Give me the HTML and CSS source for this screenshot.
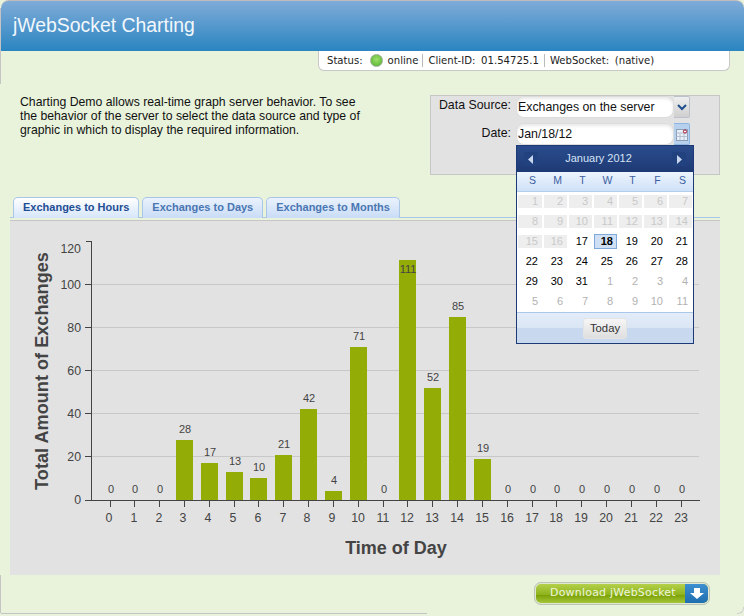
FILE: index.html
```html
<!DOCTYPE html>
<html lang="en">
<head>
<meta charset="utf-8">
<title>jWebSocket Charting</title>
<link rel="stylesheet" href="styles.css">
</head>
<body>
<div class="page">
  <header class="header"><h1 class="title">jWebSocket Charting</h1></header>
  <div class="status-row">
    <div class="status">
      <span class="status-item">Status: <i class="led"></i> online</span>
      <span class="status-item">Client-ID: 01.54725.1</span>
      <span class="status-item">WebSocket: (native)</span>
    </div>
  </div>
  <section class="intro">
    <p class="intro-text">Charting Demo allows real-time graph server behavior. To see the behavior of the server to select the data source and type of graphic in which to display the required information.</p>
    <form class="source-panel">
      <div class="field">
        <span class="field-label">Data Source:</span>
        <div class="field-box">Exchanges on the server</div>
        <div class="field-btn">
          <svg width="10" height="7" viewBox="0 0 10 7"><path d="M1 1l4 4 4-4" fill="none" stroke="#1f4f8f" stroke-width="2"/></svg>
        </div>
      </div>
      <div class="field field-date">
        <span class="field-label">Date:</span>
        <div class="field-box">Jan/18/12</div>
        <div class="field-btn field-btn-active">
          <svg width="12" height="13" viewBox="0 0 12 13"><rect x=".5" y="1.5" width="11" height="11" fill="#e9eff7" stroke="#8b9fb8"/><path d="M.5 5h11M.5 8.500h11M4 5v7M8 5v7" stroke="#b4c1d2" fill="none"/><circle cx="9" cy="3.500" r="1.600" fill="#fff" stroke="#a01030" stroke-width="1"/></svg>
        </div>
      </div>
      <div class="calendar">
        <div class="cal-head">
          <span class="cal-nav"><svg width="6" height="9" viewBox="0 0 6 9"><path d="M5 0v9L0 4.500z" fill="#c9d8ef"/></svg></span>
          <span class="cal-month">January 2012</span>
          <span class="cal-nav"><svg width="6" height="9" viewBox="0 0 6 9"><path d="M1 0v9l5-4.500z" fill="#c9d8ef"/></svg></span>
        </div>
        <div class="cal-week">
          <span>S</span><span>M</span><span>T</span><span>W</span><span>T</span><span>F</span><span>S</span>
        </div>
        <div class="cal-grid">
          <span class="day off">1</span><span class="day off">2</span><span class="day off">3</span><span class="day off">4</span><span class="day off">5</span><span class="day off">6</span><span class="day off">7</span>
          <span class="day off">8</span><span class="day off">9</span><span class="day off">10</span><span class="day off">11</span><span class="day off">12</span><span class="day off">13</span><span class="day off">14</span>
          <span class="day off">15</span><span class="day off">16</span><span class="day">17</span><span class="day today">18</span><span class="day">19</span><span class="day">20</span><span class="day">21</span>
          <span class="day">22</span><span class="day">23</span><span class="day">24</span><span class="day">25</span><span class="day">26</span><span class="day">27</span><span class="day">28</span>
          <span class="day">29</span><span class="day">30</span><span class="day">31</span><span class="day other">1</span><span class="day other">2</span><span class="day other">3</span><span class="day other">4</span>
          <span class="day other">5</span><span class="day other">6</span><span class="day other">7</span><span class="day other">8</span><span class="day other">9</span><span class="day other">10</span><span class="day other">11</span>
        </div>
        <div class="cal-foot"><span class="today-btn">Today</span></div>
      </div>
    </form>
  </section>
  <nav class="tabs">
    <a class="tab tab-active">Exchanges to Hours</a>
    <a class="tab">Exchanges to Days</a>
    <a class="tab">Exchanges to Months</a>
  </nav>
  <section class="chart">
    <svg class="chart-svg" width="710" height="354" viewBox="10 221 710 354">
      <g class="grid">
        <path d="M91 284.500H699M91 327.500H699M91 370.500H699M91 413.500H699M91 456.500H699"/>
      </g>
      <g class="bars">
        <rect x="176" y="440" width="17" height="60"/>
        <rect x="201" y="463" width="17" height="37"/>
        <rect x="226" y="472" width="17" height="28"/>
        <rect x="250" y="478" width="17" height="22"/>
        <rect x="275" y="455" width="17" height="45"/>
        <rect x="300" y="409" width="17" height="91"/>
        <rect x="325" y="491" width="17" height="9"/>
        <rect x="350" y="347" width="17" height="153"/>
        <rect x="399" y="260" width="17" height="240"/>
        <rect x="424" y="388" width="17" height="112"/>
        <rect x="449" y="317" width="17" height="183"/>
        <rect x="474" y="459" width="17" height="41"/>
      </g>
      <g class="axis">
        <path d="M91.500 241V500M86 241.500H91M85 284.500H91M85 327.500H91M85 370.500H91M85 413.500H91M85 456.500H91M85 500.500H700"/>
        <path d="M110.500 500v7M134.500 500v7M159.500 500v7M184.500 500v7M209.500 500v7M234.500 500v7M258.500 500v7M283.500 500v7M308.500 500v7M333.500 500v7M358.500 500v7M383.500 500v7M407.500 500v7M432.500 500v7M457.500 500v7M482.500 500v7M507.500 500v7M532.500 500v7M556.500 500v7M581.500 500v7M606.500 500v7M631.500 500v7M656.500 500v7M681.500 500v7"/>
      </g>
      <g class="y-labels">
        <text x="81" y="253">120</text><text x="81" y="289">100</text><text x="81" y="332">80</text><text x="81" y="375">60</text><text x="81" y="418">40</text><text x="81" y="461">20</text><text x="81" y="504">0</text>
      </g>
      <g class="x-labels">
        <text x="109" y="522">0</text><text x="134" y="522">1</text><text x="159" y="522">2</text><text x="183" y="522">3</text><text x="208" y="522">4</text><text x="233" y="522">5</text><text x="258" y="522">6</text><text x="283" y="522">7</text><text x="307" y="522">8</text><text x="332" y="522">9</text><text x="358" y="522">10</text><text x="383" y="522">11</text><text x="407" y="522">12</text><text x="432" y="522">13</text><text x="457" y="522">14</text><text x="482" y="522">15</text><text x="507" y="522">16</text><text x="532" y="522">17</text><text x="556" y="522">18</text><text x="581" y="522">19</text><text x="606" y="522">20</text><text x="631" y="522">21</text><text x="656" y="522">22</text><text x="681" y="522">23</text>
      </g>
      <g class="values">
        <text x="111" y="493">0</text><text x="135" y="493">0</text><text x="160" y="493">0</text><text x="185" y="433">28</text><text x="210" y="456">17</text><text x="235" y="465">13</text><text x="259" y="471">10</text><text x="284" y="448">21</text><text x="309" y="402">42</text><text x="334" y="484">4</text><text x="359" y="340">71</text><text x="384" y="493">0</text><text x="408" y="273">111</text><text x="433" y="381">52</text><text x="458" y="310">85</text><text x="483" y="452">19</text><text x="508" y="493">0</text><text x="533" y="493">0</text><text x="557" y="493">0</text><text x="582" y="493">0</text><text x="607" y="493">0</text><text x="632" y="493">0</text><text x="657" y="493">0</text><text x="682" y="493">0</text>
      </g>
      <text class="axis-title axis-title-y" transform="rotate(-90 48 371)" x="48" y="371">Total Amount of Exchanges</text>
      <text class="axis-title" x="396" y="554">Time of Day</text>
    </svg>
  </section>
  <footer class="footer">
    <a class="download">
      <span class="download-text">Download jWebSocket</span>
      <span class="download-icon"><svg width="14" height="13" viewBox="0 0 14 13"><path d="M4 1h6v5h4l-7 6-7-6h4z" fill="#fff"/></svg></span>
    </a>
    <div class="edge-bottom"></div>
    <div class="edge-corner"></div>
  </footer>
</div>
</body>
</html>
```
FILE: styles.css
```css
html, body {
  margin: 0;
  padding: 0;
  background: #eef0ea;
}

body {
  overflow: hidden;
}

.page {
  position: relative;
  display: flex;
  flex-direction: column;
  width: 744px;
  height: 616px;
  overflow: hidden;
  font-family: "Liberation Sans", Arial, sans-serif;
  background:
    linear-gradient(#c4c4c4, #c4c4c4) 0 8px / 1px 76px no-repeat,
    linear-gradient(#c4c4c4, #c4c4c4) 0 575px / 1px 38px no-repeat,
    #e9f3dc;
}

.header {
  flex: none;
  box-sizing: border-box;
  height: 51px;
  margin-left: 1px;
  padding: 0 12px;
  border-top: 1px solid #bcbcbc;
  border-radius: 8px 8px 0 0;
  background: linear-gradient(#7fabd8, #2a85c1);
  display: flex;
  align-items: center;
}

.title {
  margin: 0 0 1px;
  font-size: 19.4px;
  font-weight: normal;
  color: #f2f7fb;
}

.status-row {
  flex: none;
  display: flex;
  height: 20px;
  padding-left: 318px;
}

.status {
  box-sizing: border-box;
  display: flex;
  align-items: center;
  width: 412px;
  height: 20px;
  padding: 0 0 1px 8px;
  background: #fff;
  border: 1px solid #c8c8c8;
  border-top: 0;
  border-radius: 0 0 6px 6px;
  font-family: "DejaVu Sans", sans-serif;
  font-size: 10.1px;
  color: #222;
  white-space: nowrap;
}

.status-item {
  display: flex;
  align-items: center;
  gap: 4px;
  padding: 0 5px;
  height: 13px;
  border-left: 1px solid #bbb;
  word-spacing: 2.5px;
}

.status-item:first-child {
  border-left: 0;
  padding-left: 0;
  padding-right: 4px;
}

.led {
  width: 11px;
  height: 11px;
  margin: 0 1px 0 3px;
  border-radius: 50%;
  border: 1px solid #9dae95;
  background: radial-gradient(circle at 50% 40%, #9ee06a, #4fae2c);
}

.intro {
  flex: none;
  display: flex;
  justify-content: space-between;
  height: 80px;
  margin-top: 24px;
  padding: 0 24px 0 20px;
}

.intro-text {
  width: 345px;
  margin: 0;
  font-size: 12.25px;
  line-height: 14px;
  color: #111;
}

.source-panel {
  position: relative;
  box-sizing: border-box;
  width: 290px;
  height: 80px;
  margin: 0;
  border: 1px solid #c6c6c6;
  background: #e2e2e2;
}

.field {
  display: flex;
  align-items: flex-start;
  height: 22px;
}

.field-date {
  margin-top: 5px;
}

.field-label {
  box-sizing: border-box;
  width: 80px;
  margin-right: 5px;
  padding-top: 2px;
  font-size: 12.35px;
  color: #111;
  text-align: right;
}

.field-date .field-label {
  padding-top: 3px;
}

.field-box {
  box-sizing: border-box;
  width: 158px;
  height: 22px;
  padding: 2px 1px;
  font-size: 12.35px;
  line-height: 16px;
  color: #111;
  background: #fff;
  border: 1px solid #dcdcdc;
  border-radius: 8px;
  box-shadow: inset 0 2px 3px #e8e8e8;
}

.field-btn {
  box-sizing: border-box;
  display: flex;
  align-items: center;
  justify-content: center;
  width: 16px;
  height: 22px;
  background: linear-gradient(#efefef, #cfcfcf);
  border: 1px solid #bcc2cc;
  border-left: 0;
  border-radius: 0 2px 2px 0;
}

.field-btn-active {
  background: #b7d0ee;
  border-color: #8fb6e2;
}

.calendar {
  position: absolute;
  top: 49px;
  left: 85px;
  box-sizing: border-box;
  width: 178px;
  height: 199px;
  border: 1px solid #1d3a76;
  background: #fff;
  z-index: 2;
}

.cal-head {
  display: flex;
  align-items: center;
  justify-content: space-between;
  height: 26px;
  padding: 0 7px;
  background: linear-gradient(#2a4c8c, #1e3a75);
}

.cal-nav {
  display: flex;
  align-items: center;
  justify-content: center;
  width: 14px;
  height: 14px;
  background: #22427f;
  border-radius: 2px;
}

.cal-month {
  margin: 0 13px 2px 0;
  font-size: 11px;
  color: #d6e3f6;
}

.cal-week {
  display: grid;
  grid-template-columns: repeat(7, 25px);
  box-sizing: border-box;
  height: 20px;
  padding-left: 3px;
  background: linear-gradient(#edf4fd, #cfe1f8);
  border-bottom: 1px solid #b4cdeb;
  font-size: 10.500px;
  line-height: 17px;
  text-align: center;
  color: #3c5e9e;
}

.cal-grid {
  display: grid;
  grid-template-columns: 26px repeat(6, 25px);
  grid-auto-rows: 20px;
  height: 120px;
}

.day {
  align-self: start;
  box-sizing: border-box;
  height: 13px;
  margin: 3px 1px 0;
  padding-right: 4px;
  font-size: 11px;
  line-height: 13px;
  text-align: right;
  color: #000;
}

.off {
  background: #eeeeee;
  color: #c9c9c9;
}

.other {
  color: #b2b2b2;
}

.today {
  height: 15px;
  margin-top: 2px;
  padding-right: 3px;
  font-weight: bold;
  background: #cfe0f5;
  border: 1px solid #7fa9dd;
}

.cal-foot {
  box-sizing: border-box;
  display: flex;
  align-items: center;
  justify-content: center;
  height: 31px;
  border-top: 1px solid #a9c8ec;
  background: linear-gradient(#e3ecf8 0, #dbe6f5 50%, #c8d8ee 50%, #c8d8ee 100%);
}

.today-btn {
  box-sizing: border-box;
  width: 44px;
  height: 21px;
  font-size: 11.300px;
  line-height: 18px;
  text-align: center;
  color: #333;
  background: linear-gradient(#f6f6f6, #dedede);
  border: 1px solid #e4e4e4;
  border-radius: 3px;
}

.tabs {
  flex: none;
  display: flex;
  gap: 3px;
  box-sizing: border-box;
  height: 21px;
  margin: 22px 24px 0 10px;
  padding-left: 3px;
  border-bottom: 1px solid #a9c6e8;
}

.tab {
  box-sizing: border-box;
  height: 21px;
  padding: 0 9px;
  font-size: 11px;
  font-weight: bold;
  line-height: 19px;
  color: #4a76b2;
  border: 1px solid #a9c6e8;
  border-bottom: 0;
  border-radius: 5px 5px 0 0;
  background: linear-gradient(#eaf2fd, #c9dcf6);
}

.tab-active {
  color: #1f4d93;
  background: linear-gradient(#fff, #d6e6fa);
}

.chart {
  flex: none;
  box-sizing: border-box;
  height: 355px;
  margin: 2px 24px 0 10px;
  border-top: 1px solid #c6c6c6;
  background: #e2e2e2;
}

.chart-svg {
  display: block;
}

.grid path {
  fill: none;
  stroke: #c8c8c8;
}

.bars rect {
  fill: #94ac06;
}

.axis path {
  fill: none;
  stroke: #444;
}

.chart-svg text {
  font-family: "Liberation Sans", Arial, sans-serif;
  fill: #444;
}

.y-labels text {
  font-size: 12.35px;
  text-anchor: end;
}

.x-labels text {
  font-size: 12.35px;
  text-anchor: middle;
}

.values text {
  font-size: 11px;
  text-anchor: middle;
}

.chart-svg .axis-title {
  font-size: 18px;
  font-weight: bold;
  text-anchor: middle;
}

.chart-svg .axis-title-y {
  font-size: 18.150px;
}

.footer {
  position: relative;
  flex: 1;
  display: flex;
  justify-content: flex-end;
  padding: 7px 34px 0 0;
}

.download {
  box-sizing: border-box;
  display: flex;
  width: 176px;
  height: 23px;
  overflow: hidden;
  border: 2px solid #dfe8d2;
  outline: 1px solid #bcc4b4;
  outline-offset: -1px;
  border-radius: 7px;
  background: linear-gradient(#b4d04a, #8fb41e 55%, #7da208 60%, #a5c63a);
}

.download-text {
  flex: 1;
  padding-left: 14px;
  font-family: "DejaVu Sans", sans-serif;
  font-size: 11px;
  letter-spacing: .2px;
  line-height: 18px;
  color: #eef5dc;
}

.download-icon {
  display: flex;
  align-items: center;
  justify-content: center;
  width: 23px;
  background: linear-gradient(#3c8fd0, #1f6fb0);
}

.edge-bottom {
  position: absolute;
  left: 1px;
  bottom: 2px;
  width: 426px;
  height: 1px;
  background: #c4c4c4;
}

.edge-corner {
  position: absolute;
  right: 0;
  bottom: 2px;
  width: 6px;
  height: 6px;
  border-right: 1px solid #d0d0d0;
  border-bottom: 1px solid #d0d0d0;
  border-radius: 0 0 6px 0;
}
```
